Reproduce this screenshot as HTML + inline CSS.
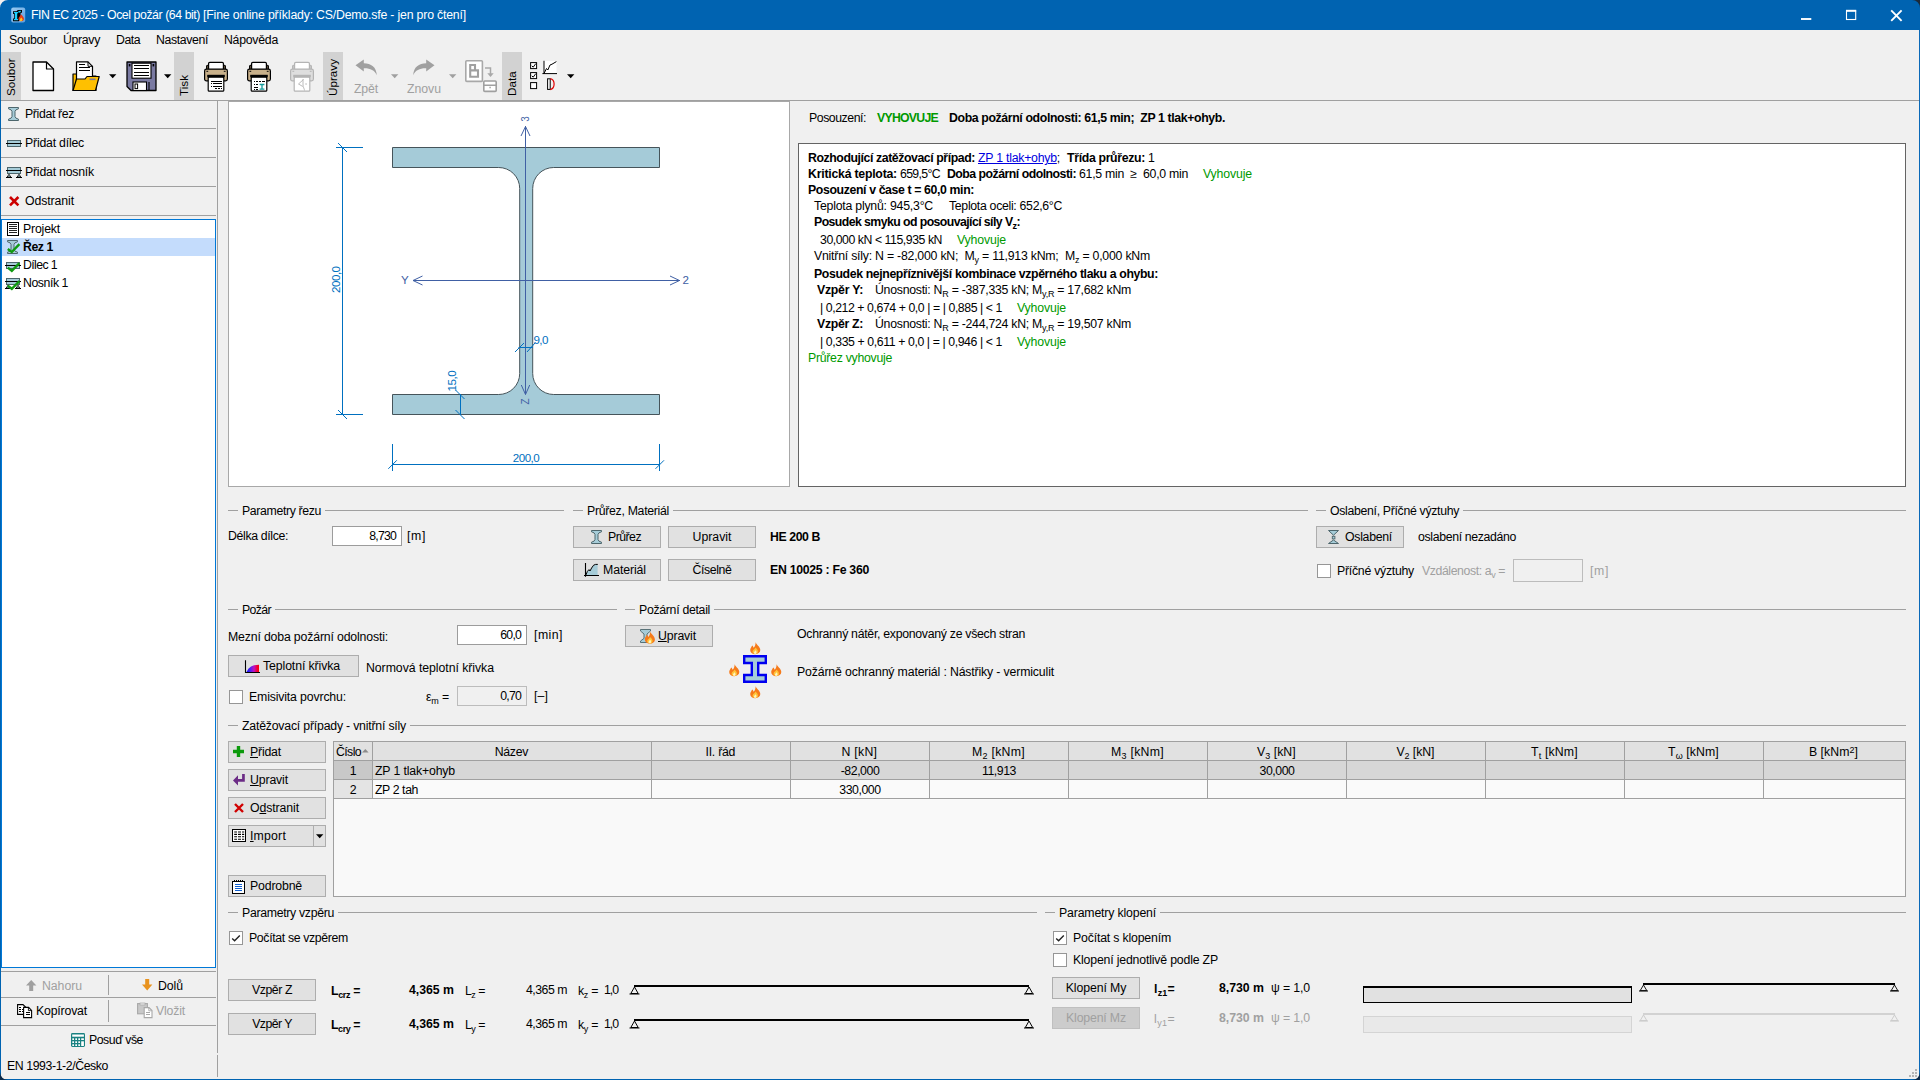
<!DOCTYPE html>
<html lang="cs">
<head>
<meta charset="utf-8">
<title>FIN EC 2025 - Ocel požár</title>
<style>
*{box-sizing:border-box;margin:0;padding:0}
html,body{width:1920px;height:1080px;overflow:hidden}
body{background:#f0f0f0;font-family:"Liberation Sans",sans-serif;font-size:12.3px;color:#000;position:relative}
.a{position:absolute}
.t{position:absolute;white-space:nowrap;line-height:16px;height:16px}
.b{font-weight:bold}
.g{color:#009900}
.d{color:#a0a0a0}
.w{color:#fff}
sub{font-size:9px;vertical-align:baseline;position:relative;top:3px;line-height:0}
sup{font-size:9px;vertical-align:baseline;position:relative;top:-3px;line-height:0}
.btn{position:absolute;background:#e1e1e1;border:1px solid #adadad;height:22px}
.btn.dis{background:#cccccc;border-color:#bfbfbf}
.inp{position:absolute;background:#fff;border:1px solid #9c9c9c;height:20px}
.inp.dis{background:#f0f0f0;border-color:#bcbcbc}
.cb{position:absolute;width:14px;height:14px;background:#fff;border:1px solid #969696}
.hl{position:absolute;height:1px;background:#a0a0a0}
.vl{position:absolute;width:1px;background:#a0a0a0}
.vlab{position:absolute;background:#d2d2d2;width:20px;top:52px;height:48px}
.vlab span{position:absolute;left:2px;bottom:4px;white-space:nowrap;line-height:16px;height:16px;transform-origin:0 100%;transform:rotate(-90deg) translateY(16px);font-size:11.7px}
svg{position:absolute;overflow:visible}
u{text-decoration:underline;text-underline-offset:1px}
</style>
</head>
<body>
<div class="a" style="left:0px;top:0px;width:1920px;height:30px;background:#0063b1"></div>
<svg style="left:0;top:0" width="8" height="8"><path d="M0 0H8A8 8 0 0 0 0 8Z" fill="#f4f0f0"/></svg>
<svg style="left:1912px;top:0" width="8" height="8"><path d="M8 0H0A8 8 0 0 1 8 8Z" fill="#1b2a3a"/></svg>
<svg style="left:11px;top:7px" width="16" height="16" viewBox="0 0 16 16"><defs><linearGradient id="ai" x1="0" y1="0" x2="1" y2="1"><stop offset="0" stop-color="#9ccaf0"/><stop offset="1" stop-color="#5a9fe0"/></linearGradient></defs>
<rect x="0.2" y="0.6" width="14" height="14.8" rx="2" fill="url(#ai)"/>
<path d="M2 4.3H5.6L6.8 3H11V5.8H9.6V9.5L8 12.2V14.2H2V11.4H3.2V7H2Z" fill="#000"/>
<path d="M2.9 5.1H7.1V6.3H6.2V11.9H7.1V13.2H2.9V11.9H3.9V6.3H2.9Z" fill="#18d0ff"/>
<path d="M7 4.6Q8.6 3.5 10.2 3.9Q9.6 5.6 7.8 5.8Z" fill="#18d0ff"/>
<path d="M9.9 7.2Q13.4 10.4 12.9 12.4Q12.4 14.2 10.4 14.2Q8 14.2 7.5 12.2Q7.3 10.8 8.4 9.7Q9.7 8.6 9.9 7.2Z" fill="#ea3a16"/>
<path d="M10.2 10.4Q12 12 11.5 13.1Q11 14.2 10.1 14.2Q8.8 14 8.8 12.9Q9 11.6 10.2 10.4Z" fill="#ffc820"/></svg>
<span id="t1" class="t w" style="left:31px;top:7px;letter-spacing:-0.429px;">FIN EC 2025 - Ocel požár (64 bit)</span>
<span id="t2" class="t w" style="left:203px;top:7px;letter-spacing:-0.158px;">[Fine online příklady:</span>
<span id="t3" class="t w" style="left:316px;top:7px;letter-spacing:-0.184px;">CS/Demo.sfe - jen pro čtení]</span>
<svg style="left:1790px;top:0" width="130" height="30"><path d="M11 19H21.3" stroke="#fff" stroke-width="1.9"/><rect x="56.5" y="11" width="9.2" height="8.5" fill="none" stroke="#fff" stroke-width="1.1"/><path d="M56 10.7H66.2" stroke="#fff" stroke-width="1.8"/><path d="M101.2 10.4L111.6 20.8M111.6 10.4L101.2 20.8" stroke="#fff" stroke-width="1.9"/></svg>
<div class="a" style="left:0px;top:30px;width:1px;height:1050px;background:#0063b1"></div>
<div class="a" style="left:1919px;top:30px;width:1px;height:1050px;background:#0a69b8"></div>
<div class="a" style="left:0px;top:1079px;width:1920px;height:1px;background:#0063b1"></div>
<svg style="left:0;top:1072px" width="8" height="8"><path d="M0 8H8A8 8 0 0 1 0 0Z" fill="#0c2a4a"/></svg>
<svg style="left:1912px;top:1072px" width="8" height="8"><path d="M8 8H0A8 8 0 0 0 8 0Z" fill="#0c2a4a"/></svg>
<svg style="left:1909px;top:1069px" width="8" height="8" viewBox="0 0 8 8"><rect x="6" y="0" width="2" height="2" fill="#b4b4b4"/><rect x="3" y="3" width="2" height="2" fill="#b4b4b4"/><rect x="6" y="3" width="2" height="2" fill="#b4b4b4"/><rect x="0" y="6" width="2" height="2" fill="#b4b4b4"/><rect x="3" y="6" width="2" height="2" fill="#b4b4b4"/><rect x="6" y="6" width="2" height="2" fill="#b4b4b4"/></svg>
<span id="t4" class="t" style="left:9px;top:32px;letter-spacing:-0.277px;">Soubor</span>
<span id="t5" class="t" style="left:63px;top:32px;letter-spacing:-0.327px;">Úpravy</span>
<span id="t6" class="t" style="left:116px;top:32px;letter-spacing:-0.494px;">Data</span>
<span id="t7" class="t" style="left:156px;top:32px;letter-spacing:-0.374px;">Nastavení</span>
<span id="t8" class="t" style="left:224px;top:32px;letter-spacing:-0.258px;">Nápověda</span>
<div class="vlab" style="left:1px"><span>Soubor</span></div>
<div class="vlab" style="left:174px"><span>Tisk</span></div>
<div class="vlab" style="left:323px"><span>Úpravy</span></div>
<div class="vlab" style="left:502px"><span>Data</span></div>
<div class="hl" style="left:1px;top:100px;width:1918px;"></div>
<svg style="left:32px;top:61px" width="23" height="31" viewBox="0 0 23 31"><path d="M1 1H14.5L21.5 8V29.5H1Z" fill="#fff" stroke="#000" stroke-width="1.3" stroke-linejoin="round"/><path d="M14.5 1V8H21.5" fill="none" stroke="#000" stroke-width="1.2" stroke-linejoin="round"/></svg>
<svg style="left:72px;top:61px" width="28" height="31" viewBox="0 0 28 31"><path d="M1 29.5V13H9L11 15H24V29.5Z" fill="#ffc000" stroke="#000" stroke-width="1.2" stroke-linejoin="round"/>
<path d="M4.5 21V0.8H16L20.5 5.3V21Z" fill="#fff" stroke="#000" stroke-width="1.2" stroke-linejoin="round"/><path d="M16 0.8V5.3H20.5" fill="none" stroke="#000" stroke-width="1"/>
<path d="M7 3.5H13M7 6.5H18M7 9.5H18" stroke="#000" stroke-width="1" shape-rendering="crispEdges"/>
<path d="M1 29.5L4.5 18H13L15 15.5H27.2L23.5 29.5Z" fill="#ffc000" stroke="#000" stroke-width="1.2" stroke-linejoin="round"/><rect x="17.5" y="17.5" width="6" height="1.6" fill="#7a7a9a"/></svg>
<svg style="left:109px;top:74px" width="8" height="5" viewBox="0 0 8 5"><path d="M0 0.3H7.4L3.7 4.2Z" fill="#000"/></svg>
<svg style="left:126px;top:61px" width="31" height="31" viewBox="0 0 31 31"><path d="M1 1H30V29.5H5L1 25.5Z" fill="#7a7aa2" stroke="#000" stroke-width="1.3" stroke-linejoin="round"/>
<rect x="6" y="2.2" width="19" height="15" fill="#fff" stroke="#000" stroke-width="1.1"/>
<path d="M8 4.5H22.5M8 7.5H22.5M8 11.5H22.5M8 14.5H22.5" stroke="#000" stroke-width="1" shape-rendering="crispEdges"/>
<rect x="2.8" y="3" width="1.6" height="2.4" fill="#000"/><rect x="26.6" y="3" width="1.6" height="2.4" fill="#000"/>
<rect x="7" y="21" width="13.5" height="8.5" fill="#fff" stroke="#000" stroke-width="1.1"/><rect x="9" y="23" width="2.6" height="4.6" fill="#fff" stroke="#000" stroke-width="1"/>
<path d="M23 21V29.5" stroke="#000" stroke-width="1.1"/></svg>
<svg style="left:164px;top:74px" width="8" height="5" viewBox="0 0 8 5"><path d="M0 0.3H7.4L3.7 4.2Z" fill="#000"/></svg>
<svg style="left:204px;top:60.6px" width="24" height="31" viewBox="0 0 24 31"><path d="M2.6 8.5V5.2Q2.6 4.2 3.6 4.2H20.4Q21.4 4.2 21.4 5.2V8.5" fill="#6b5a40" stroke="#000" stroke-width="1.1"/>
<rect x="4.6" y="1.4" width="14.8" height="7.4" rx="1.2" fill="#fff" stroke="#000" stroke-width="1.2"/>
<rect x="0.6" y="8.2" width="22.8" height="11.6" rx="1.8" fill="#c8b08a" stroke="#000" stroke-width="1.2"/>
<rect x="2.4" y="9.8" width="1.8" height="1" fill="#000"/><rect x="19.8" y="9.8" width="1.8" height="1" fill="#000"/>
<rect x="3.2" y="13.8" width="17.6" height="2.6" fill="#000"/>
<rect x="4.2" y="16.2" width="15.6" height="14" rx="1" fill="#fff" stroke="#000" stroke-width="1.2"/><g shape-rendering="crispEdges" stroke="#000" stroke-width="1"><path d="M6.5 20.5H18M6.5 22.5H7.5M9 22.5H18M6.5 25.5H7.5M9 25.5H18M11 27.5H13M14 27.5H16M17 27.5H18"/></g></svg>
<svg style="left:247px;top:60.6px" width="24" height="31" viewBox="0 0 24 31"><path d="M2.6 8.5V5.2Q2.6 4.2 3.6 4.2H20.4Q21.4 4.2 21.4 5.2V8.5" fill="#6b5a40" stroke="#000" stroke-width="1.1"/>
<rect x="4.6" y="1.4" width="14.8" height="7.4" rx="1.2" fill="#fff" stroke="#000" stroke-width="1.2"/>
<rect x="0.6" y="8.2" width="22.8" height="11.6" rx="1.8" fill="#c8b08a" stroke="#000" stroke-width="1.2"/>
<rect x="2.4" y="9.8" width="1.8" height="1" fill="#000"/><rect x="19.8" y="9.8" width="1.8" height="1" fill="#000"/>
<rect x="3.2" y="13.8" width="17.6" height="2.6" fill="#000"/>
<rect x="4.2" y="16.2" width="15.6" height="14" rx="1" fill="#fff" stroke="#000" stroke-width="1.2"/><g shape-rendering="crispEdges" stroke="#000" stroke-width="1"><path d="M6.5 20.5H7.5M8.5 20.5H10.5M11.5 20.5H13.5M14.5 20.5H17.5M6.5 23.5H7.5M8.5 23.5H11M6.5 26.5H11M6.5 28.5H7.5M8.5 28.5H11"/></g><path d="M12.6 23.5H17.4M12.6 28.2H17.4M15 23.5V28.2" stroke="#109a9a" stroke-width="1.3"/></svg>
<svg style="left:290px;top:60.6px" width="24" height="31" viewBox="0 0 24 31"><path d="M2.6 8.5V5.2Q2.6 4.2 3.6 4.2H20.4Q21.4 4.2 21.4 5.2V8.5" fill="#c8c8c8" stroke="#b4b4b4" stroke-width="1.1"/>
<rect x="4.6" y="1.4" width="14.8" height="7.4" rx="1.2" fill="#fff" stroke="#b4b4b4" stroke-width="1.2"/>
<rect x="0.6" y="8.2" width="22.8" height="11.6" rx="1.8" fill="#dedede" stroke="#b4b4b4" stroke-width="1.2"/>
<rect x="2.4" y="9.8" width="1.8" height="1" fill="#b4b4b4"/><rect x="19.8" y="9.8" width="1.8" height="1" fill="#b4b4b4"/>
<rect x="3.2" y="13.8" width="17.6" height="2.6" fill="#b4b4b4"/>
<rect x="4.2" y="16.2" width="15.6" height="14" rx="1" fill="#fff" stroke="#b4b4b4" stroke-width="1.2"/><path d="M13.5 18.5L8.5 23L12.8 25.5M13 18V24C13 26 14.5 28 14.5 29.5M15.2 23H17" stroke="#b4b4b4" stroke-width="0.9" fill="none"/></svg>
<svg style="left:355px;top:59px" width="23" height="17" viewBox="0 0 23 17"><path d="M0.5 6.2L8.8 0.5V4.2C16 4.2 21.5 8 21.8 16.2C19.5 11 15 9 8.8 9.2V12.5Z" fill="#a0a0a0"/></svg>
<span id="t9" class="t d" style="left:354px;top:81px;letter-spacing:-0.153px;">Zpět</span>
<svg style="left:391px;top:74px" width="8" height="5" viewBox="0 0 8 5"><path d="M0 0.3H7.4L3.7 4.2Z" fill="#a0a0a0"/></svg>
<svg style="left:412px;top:59px" width="23" height="17" viewBox="0 0 23 17"><path d="M22.5 6.2L14.2 0.5V4.2C7 4.2 1.5 8 1.2 16.2C3.5 11 8 9 14.2 9.2V12.5Z" fill="#a0a0a0"/></svg>
<span id="t10" class="t d" style="left:407px;top:81px;letter-spacing:-0.038px;">Znovu</span>
<svg style="left:449px;top:74px" width="8" height="5" viewBox="0 0 8 5"><path d="M0 0.3H7.4L3.7 4.2Z" fill="#a0a0a0"/></svg>
<svg style="left:465px;top:60px" width="33" height="33" viewBox="0 0 33 33"><rect x="0.8" y="0.8" width="16.6" height="20.6" rx="1" fill="#fff" stroke="#a8a8a8" stroke-width="1.6"/>
<path d="M5.2 5H10V10.4H13V16.8H5.2Z M5.2 10.4H10" fill="none" stroke="#a0a0a0" stroke-width="2.1"/>
<path d="M20 8H25.5V15" fill="none" stroke="#a8a8a8" stroke-width="1.5"/><path d="M22.3 13.2H28.7L25.5 17Z" fill="#a8a8a8"/>
<rect x="18.8" y="21" width="12.4" height="10.4" rx="1" fill="#fff" stroke="#a0a0a0" stroke-width="1.6"/><path d="M19 25.2H31M24.4 27.4H25.8" stroke="#a0a0a0" stroke-width="1.5"/></svg>
<svg style="left:530px;top:60px" width="30" height="32" viewBox="0 0 30 32"><rect x="0.6" y="2.6" width="6" height="6" fill="#fff" stroke="#000" stroke-width="1"/><path d="M1.8 5.8L3.2 7.2L5.8 3.6" fill="none" stroke="#000" stroke-width="1"/>
<rect x="0.6" y="12.6" width="6" height="6" fill="#fff" stroke="#000" stroke-width="1"/><path d="M1.8 15.8L3.2 17.2L5.8 13.6" fill="none" stroke="#000" stroke-width="1"/>
<rect x="0.6" y="22.6" width="6" height="6" fill="#fff" stroke="#000" stroke-width="1"/>
<rect x="14" y="1" width="12.5" height="12.5" fill="#fff"/>
<path d="M14 0.8V14M12.4 13.6H27" stroke="#000" stroke-width="1" fill="none"/><path d="M14 13.5L16.5 8.5L17.8 10L20 5L22 4.2L26.4 1.6" stroke="#000" stroke-width="1" fill="none"/>
<rect x="17.6" y="18.8" width="2.6" height="10.6" fill="#fff" stroke="#000" stroke-width="1"/><path d="M20.2 18.6C25.4 19.6 25.4 28.6 20.2 29.6" fill="none" stroke="#e00000" stroke-width="1.2"/></svg>
<svg style="left:567px;top:74px" width="8" height="5" viewBox="0 0 8 5"><path d="M0 0.3H7.4L3.7 4.2Z" fill="#000"/></svg>
<div class="vl" style="left:217px;top:101px;height:952px;"></div>
<div class="vl" style="left:217px;top:1055px;height:22px;"></div>
<div class="hl" style="left:1px;top:128px;width:215px;"></div>
<div class="hl" style="left:1px;top:157px;width:215px;"></div>
<div class="hl" style="left:1px;top:186px;width:215px;"></div>
<div class="hl" style="left:1px;top:215px;width:215px;"></div>
<svg style="left:8px;top:107px" width="11" height="14" viewBox="0 0 11 14"><path d="M0.5 0.5H10.5V1.8Q7.2 2.6 7 4.4V9.6Q7.2 11.4 10.5 12.2V13.5H0.5V12.2Q3.8 11.4 4 9.6V4.4Q3.8 2.6 0.5 1.8Z" fill="#a6ccd8" stroke="#4d666c" stroke-width="1"/></svg>
<span id="t11" class="t" style="left:25px;top:106px;letter-spacing:-0.363px;">Přidat řez</span>
<svg style="left:6px;top:140px" width="16" height="8" viewBox="0 0 16 8"><g shape-rendering="crispEdges"><rect x="1.5" y="0.5" width="13" height="6" fill="#a6ccd8" stroke="#4d666c" stroke-width="1"/><path d="M0 3.5H16" stroke="#000" stroke-width="1"/></g></svg>
<span id="t12" class="t" style="left:25px;top:135px;letter-spacing:-0.210px;">Přidat dílec</span>
<svg style="left:6px;top:167px" width="16" height="11" viewBox="0 0 16 11"><g shape-rendering="crispEdges"><rect x="1.5" y="0.5" width="13" height="6" fill="#a6ccd8" stroke="#4d666c" stroke-width="1"/><path d="M0 3.5H16" stroke="#000" stroke-width="1"/><path d="M0 10.5H6M10 10.5H16" stroke="#000" stroke-width="1"/></g><path d="M3 7.2L1.2 10H4.8Z M13 7.2L11.2 10H14.8Z" fill="#a6ccd8" stroke="#000" stroke-width="0.8"/></svg>
<span id="t13" class="t" style="left:25px;top:164px;letter-spacing:-0.214px;">Přidat nosník</span>
<svg style="left:9px;top:196px" width="10" height="10" viewBox="0 0 10 10"><path d="M1 1L9.4 9.4M9.4 1L1 9.4" stroke="#cc0000" stroke-width="2.6"/></svg>
<span id="t14" class="t" style="left:25px;top:193px;letter-spacing:-0.100px;">Odstranit</span>
<div class="a" style="left:1px;top:219px;width:215px;height:749px;background:#fff;border:1px solid #0078d7"></div>
<div class="a" style="left:2px;top:238px;width:213px;height:18px;background:#c4dcfc"></div>
<svg style="left:7px;top:222px" width="13" height="14" viewBox="0 0 13 14"><g shape-rendering="crispEdges"><rect x="0.5" y="0.5" width="11" height="13" fill="#fff" stroke="#000" stroke-width="1"/><path d="M2 2.5H10M2 4.5H10M2 6.5H10M2 8.5H10M2 10.5H10" stroke="#222" stroke-width="1"/></g></svg>
<span id="t15" class="t" style="left:23px;top:221px;letter-spacing:-0.183px;">Projekt</span>
<svg style="left:7px;top:240px" width="11" height="14" viewBox="0 0 11 14"><path d="M0.5 0.5H10.5V1.8Q7.2 2.6 7 4.4V9.6Q7.2 11.4 10.5 12.2V13.5H0.5V12.2Q3.8 11.4 4 9.6V4.4Q3.8 2.6 0.5 1.8Z" fill="#a6ccd8" stroke="#4d666c" stroke-width="1"/></svg>
<svg style="left:7px;top:243px" width="13" height="10" viewBox="0 0 13 10"><path d="M0.8 6L4.8 9L12.4 1.2" fill="none" stroke="#109a10" stroke-width="2.4"/></svg>
<span id="t16" class="t b" style="left:23px;top:239px;letter-spacing:-0.426px;">Řez 1</span>
<svg style="left:5px;top:262px" width="16" height="8" viewBox="0 0 16 8"><g shape-rendering="crispEdges"><rect x="1.5" y="0.5" width="13" height="6" fill="#a6ccd8" stroke="#4d666c" stroke-width="1"/><path d="M0 3.5H16" stroke="#000" stroke-width="1"/></g></svg>
<svg style="left:7px;top:262px" width="13" height="10" viewBox="0 0 13 10"><path d="M0.8 5.6L4.8 8.8L12.4 1.2" fill="none" stroke="#109a10" stroke-width="2.4"/></svg>
<span id="t17" class="t" style="left:23px;top:257px;letter-spacing:-0.612px;">Dílec 1</span>
<svg style="left:5px;top:278px" width="16" height="11" viewBox="0 0 16 11"><g shape-rendering="crispEdges"><rect x="1.5" y="0.5" width="13" height="6" fill="#a6ccd8" stroke="#4d666c" stroke-width="1"/><path d="M0 3.5H16" stroke="#000" stroke-width="1"/><path d="M0 10.5H6M10 10.5H16" stroke="#000" stroke-width="1"/></g><path d="M3 7.2L1.2 10H4.8Z M13 7.2L11.2 10H14.8Z" fill="#a6ccd8" stroke="#000" stroke-width="0.8"/></svg>
<svg style="left:7px;top:280px" width="13" height="10" viewBox="0 0 13 10"><path d="M0.8 5.6L4.8 8.8L12.4 1.2" fill="none" stroke="#109a10" stroke-width="2.4"/></svg>
<span id="t18" class="t" style="left:23px;top:275px;letter-spacing:-0.442px;">Nosník 1</span>
<div class="hl" style="left:1px;top:971px;width:215px;"></div>
<div class="hl" style="left:1px;top:997px;width:215px;"></div>
<div class="hl" style="left:1px;top:1025px;width:215px;"></div>
<div class="vl" style="left:108px;top:975px;height:20px;"></div>
<div class="vl" style="left:108px;top:1000px;height:22px;"></div>
<svg style="left:26px;top:980px" width="11" height="11" viewBox="0 0 11 11"><path d="M5.2 0L10.4 5.6H7.2V11H3.2V5.6H0Z" fill="#a0a0a0"/></svg>
<span id="t19" class="t d" style="left:42px;top:978px;letter-spacing:-0.056px;">Nahoru</span>
<svg style="left:142px;top:979px" width="11" height="12" viewBox="0 0 11 12"><path d="M5.2 11.4L10.4 5.6H7.2V0H3.2V5.6H0Z" fill="#e8931f"/></svg>
<span id="t20" class="t" style="left:158px;top:978px;letter-spacing:-0.076px;">Dolů</span>
<svg style="left:17px;top:1004px" width="16" height="15" viewBox="0 0 16 15"><path d="M0.6 0.6H6L9 3.6V10.4H0.6Z" fill="#fff" stroke="#000" stroke-width="1.1"/><path d="M2 3.5H4M2 5.5H4M5 5.5H6.4M2 7.5H4M5 7.5H6.4" stroke="#000" stroke-width="1" shape-rendering="crispEdges"/><path d="M6.6 3.4H11.6L14.6 6.4V13.6H6.6Z" fill="#fff" stroke="#000" stroke-width="1.1"/><path d="M11.4 3.6V6.6H14.4" fill="none" stroke="#000" stroke-width="0.9"/><path d="M8.5 8.5H13M8.5 10.5H13M8.5 12" stroke="#000" stroke-width="1" shape-rendering="crispEdges"/></svg>
<span id="t21" class="t" style="left:36px;top:1003px;letter-spacing:-0.183px;">Kopírovat</span>
<svg style="left:137px;top:1003.4px" width="16" height="16" viewBox="0 0 16 16"><rect x="0.6" y="0.6" width="9.8" height="10.2" fill="#c8c8c8" stroke="#a8a8a8" stroke-width="1.1"/><rect x="3" y="0" width="5" height="2" fill="#e6e6e6" stroke="#a8a8a8" stroke-width="0.7"/><path d="M7.2 4.6H12L15 7.6V14.6H7.2Z" fill="#fff" stroke="#a8a8a8" stroke-width="1.1"/><path d="M11.8 4.8V7.8H14.8" fill="none" stroke="#a8a8a8" stroke-width="0.9"/><path d="M9 9.5H13.4M9 11.5H13.4" stroke="#a8a8a8" stroke-width="1" shape-rendering="crispEdges"/></svg>
<span id="t22" class="t d" style="left:156px;top:1003px;letter-spacing:-0.180px;">Vložit</span>
<svg style="left:71px;top:1033px" width="14" height="14" viewBox="0 0 14 14"><rect x="0" y="0" width="14" height="14" rx="1.4" fill="#1a8282"/><rect x="1.2" y="1.5" width="11.7" height="2.2" fill="#fff"/><rect x="1.3" y="5.3" width="1.7" height="1.7" fill="#fff"/><rect x="4.3" y="5.3" width="1.7" height="1.7" fill="#fff"/><rect x="7.3" y="5.3" width="1.7" height="1.7" fill="#fff"/><rect x="1.3" y="8.3" width="1.7" height="1.7" fill="#fff"/><rect x="4.3" y="8.3" width="1.7" height="1.7" fill="#fff"/><rect x="7.3" y="8.3" width="1.7" height="1.7" fill="#fff"/><rect x="1.3" y="11.3" width="1.7" height="1.7" fill="#fff"/><rect x="4.3" y="11.3" width="1.7" height="1.7" fill="#fff"/><rect x="7.3" y="11.3" width="1.7" height="1.7" fill="#fff"/><rect x="10.2" y="5.3" width="2.7" height="1.7" fill="#fff"/><rect x="10.2" y="8.3" width="2.7" height="4.7" fill="#fff"/></svg>
<span id="t23" class="t" style="left:89px;top:1032px;letter-spacing:-0.462px;">Posuď vše</span>
<span id="t24" class="t" style="left:7px;top:1058px;letter-spacing:-0.412px;">EN 1993-1-2/Česko</span>
<div class="a" style="left:228px;top:101px;width:562px;height:386px;background:#fff;border:1px solid #a8a8a8"></div>
<svg style="left:0;top:0" width="800" height="490"><path d="M392.5 147.5H659.5V167.5H553.7A21 21 0 0 0 532.7 188.5V373.5A21 21 0 0 0 553.7 394.5H659.5V414.5H392.5V394.5H498.70000000000005A21 21 0 0 0 519.7 373.5V188.5A21 21 0 0 0 498.70000000000005 167.5H392.5Z" fill="#a5cbd8" stroke="#46545a" stroke-width="1"/><g stroke="#4060a4" stroke-width="1" fill="none"><path d="M525.5 126V394.5"/><path d="M521 136L525.5 126.5L530 136"/><path d="M521.3 385L525.5 394.5L529.7 385"/><path d="M413 280.5H680"/><path d="M422.5 276L413 280.5L422.5 285"/><path d="M670 276L679.5 280.5L670 285"/></g><g stroke="#0070c0" stroke-width="1" fill="none"><path d="M342.5 147V415M336 147.5H363M336 414.5H363M338 143L347 152M338 410L347 419"/><path d="M392 464.5H660M392.5 444V471M659.5 444V471M388.3 468.8L396.8 460.3M655.5 468.8L664 460.3"/><path d="M518.5 347.5H533M515 352L524 343M527 352L535 343"/><path d="M460.5 394V415M455.5 390L464.5 399M455.5 410L464.5 419"/></g><g font-family="Liberation Sans, sans-serif" font-size="11.6" letter-spacing="-0.5" fill="#0070c0"><text x="526" y="462" text-anchor="middle">200,0</text><text transform="translate(339.6,279.7) rotate(-90)" text-anchor="middle">200,0</text><text x="533.5" y="344.4" letter-spacing="-0.6">9,0</text><text transform="translate(456.4,381.2) rotate(-90)" text-anchor="middle">15,0</text></g><g font-family="Liberation Sans, sans-serif" font-size="11.6" fill="#4060a4"><text x="401" y="283.8">Y</text><text x="682.5" y="283.8">2</text><text transform="translate(528.6,119) rotate(-90) scale(0.8,1)" text-anchor="middle">3</text><text transform="translate(528.8,401.5) rotate(-90) scale(0.85,1)" text-anchor="middle">Z</text></g></svg>
<span id="t25" class="t" style="left:809px;top:110px;letter-spacing:-0.454px;">Posouzení:</span>
<span id="t26" class="t b g" style="left:877px;top:110px;letter-spacing:-0.748px;">VYHOVUJE</span>
<span id="t27" class="t b" style="left:949px;top:110px;letter-spacing:-0.372px;">Doba požární odolnosti: 61,5 min;&nbsp; ZP 1 tlak+ohyb.</span>
<div class="a" style="left:798px;top:143px;width:1108px;height:344px;background:#fff;border:1px solid #646464"></div>
<span id="t28" class="t b" style="left:808px;top:150px;letter-spacing:-0.424px;">Rozhodující zatěžovací případ:</span>
<span id="t29" class="t" style="left:978px;top:150px;letter-spacing:-0.239px;"><u style="color:#0000e0">ZP 1 tlak+ohyb</u>;</span>
<span id="t30" class="t b" style="left:1067px;top:150px;letter-spacing:-0.334px;">Třída průřezu:</span>
<span id="t31" class="t" style="left:1148px;top:150px;">1</span>
<span id="t32" class="t b" style="left:808px;top:166px;letter-spacing:-0.232px;">Kritická teplota:</span>
<span id="t33" class="t" style="left:900px;top:166px;letter-spacing:-0.655px;">659,5°C</span>
<span id="t34" class="t b" style="left:947px;top:166px;letter-spacing:-0.510px;">Doba požární odolnosti:</span>
<span id="t35" class="t" style="left:1079px;top:166px;letter-spacing:-0.274px;">61,5 min&nbsp; ≥&nbsp; 60,0 min</span>
<span id="t36" class="t g" style="left:1203px;top:166px;letter-spacing:-0.142px;">Vyhovuje</span>
<span id="t37" class="t b" style="left:808px;top:182px;letter-spacing:-0.378px;">Posouzení v čase t = 60,0 min:</span>
<span id="t38" class="t" style="left:814px;top:198px;letter-spacing:-0.222px;">Teplota plynů: 945,3°C</span>
<span id="t39" class="t" style="left:949px;top:198px;letter-spacing:-0.308px;">Teplota oceli: 652,6°C</span>
<span id="t40" class="t b" style="left:814px;top:214px;letter-spacing:-0.576px;">Posudek smyku od posouvající síly V<sub>z</sub>:</span>
<span id="t41" class="t" style="left:820px;top:232px;letter-spacing:-0.457px;">30,000 kN &lt; 115,935 kN</span>
<span id="t42" class="t g" style="left:957px;top:232px;letter-spacing:-0.143px;">Vyhovuje</span>
<span id="t43" class="t" style="left:814px;top:248px;letter-spacing:-0.225px;">Vnitřní síly: N = -82,000 kN;&nbsp; M<sub>y</sub> = 11,913 kNm;&nbsp; M<sub>z</sub> = 0,000 kNm</span>
<span id="t44" class="t b" style="left:814px;top:266px;letter-spacing:-0.378px;">Posudek nejnepříznivější kombinace vzpěrného tlaku a ohybu:</span>
<span id="t45" class="t b" style="left:817px;top:282px;letter-spacing:-0.259px;">Vzpěr Y:</span>
<span id="t46" class="t" style="left:875px;top:282px;letter-spacing:-0.264px;">Únosnosti: N<sub>R</sub> = -387,335 kN; M<sub>y,R</sub> = 17,682 kNm</span>
<span id="t47" class="t" style="left:820px;top:300px;letter-spacing:-0.430px;">| 0,212 + 0,674 + 0,0 | = | 0,885 | &lt; 1</span>
<span id="t48" class="t g" style="left:1017px;top:300px;letter-spacing:-0.142px;">Vyhovuje</span>
<span id="t49" class="t b" style="left:817px;top:316px;letter-spacing:-0.315px;">Vzpěr Z:</span>
<span id="t50" class="t" style="left:875px;top:316px;letter-spacing:-0.264px;">Únosnosti: N<sub>R</sub> = -244,724 kN; M<sub>y,R</sub> = 19,507 kNm</span>
<span id="t51" class="t" style="left:820px;top:334px;letter-spacing:-0.406px;">| 0,335 + 0,611 + 0,0 | = | 0,946 | &lt; 1</span>
<span id="t52" class="t g" style="left:1017px;top:334px;letter-spacing:-0.143px;">Vyhovuje</span>
<span id="t53" class="t g" style="left:808px;top:350px;letter-spacing:-0.278px;">Průřez vyhovuje</span>
<div class="hl" style="left:228px;top:510px;width:10px;"></div>
<span id="t54" class="t" style="left:242px;top:503px;letter-spacing:-0.362px;">Parametry řezu</span>
<div class="hl" style="left:325px;top:510px;width:239px;"></div>
<span id="t55" class="t" style="left:228px;top:528px;letter-spacing:-0.354px;">Délka dílce:</span>
<div class="inp " style="left:332px;top:526px;width:70px;height:20px"></div>
<span class="t" style="right:1523.8px;top:528px;letter-spacing:-0.75px;">8,730</span>
<span id="t56" class="t" style="left:407px;top:528px;letter-spacing:0.640px;">[m]</span>
<div class="hl" style="left:573px;top:510px;width:10px;"></div>
<span id="t57" class="t" style="left:587px;top:503px;letter-spacing:-0.300px;">Průřez, Materiál</span>
<div class="hl" style="left:673px;top:510px;width:635px;"></div>
<div class="btn " style="left:573px;top:526px;width:88px;height:22px"></div>
<span id="t58" class="t" style="left:608px;top:529px;letter-spacing:-0.538px;">Průřez</span>
<svg style="left:591px;top:530px" width="11" height="14" viewBox="0 0 11 14"><path d="M0.5 0.5H10.5V1.8Q7.2 2.6 7 4.4V9.6Q7.2 11.4 10.5 12.2V13.5H0.5V12.2Q3.8 11.4 4 9.6V4.4Q3.8 2.6 0.5 1.8Z" fill="#a6ccd8" stroke="#4d666c" stroke-width="1"/></svg>
<div class="btn " style="left:668px;top:526px;width:88px;height:22px"></div>
<span id="c59" class="t" style="left:692.5px;top:529px;letter-spacing:0.007px;">Upravit</span>
<span id="t60" class="t b" style="left:770px;top:529px;letter-spacing:-0.416px;">HE 200 B</span>
<div class="btn " style="left:573px;top:559px;width:88px;height:22px"></div>
<span id="t61" class="t" style="left:603px;top:562px;letter-spacing:-0.092px;">Materiál</span>
<svg style="left:584px;top:563px" width="16" height="14" viewBox="0 0 16 14"><path d="M1.9 12L3.4 8.6L5 6.8L6 8L7.6 5L9.6 2.2L11.6 1.5H13.6V12Z" fill="#a6ccd8"/><path d="M1.5 0V13.8M0 12.5H15" stroke="#000" stroke-width="1.1" fill="none"/><path d="M1.8 12.2L3.4 8.4L5 6.6L6 8L7.6 5L9.6 2.2L11.6 1.4H13.8" fill="none" stroke="#000" stroke-width="1"/></svg>
<div class="btn " style="left:668px;top:559px;width:88px;height:22px"></div>
<span id="c62" class="t" style="left:692.4px;top:562px;letter-spacing:-0.358px;">Číselně</span>
<span id="t63" class="t b" style="left:770px;top:562px;letter-spacing:-0.289px;">EN 10025 : Fe 360</span>
<div class="hl" style="left:1316px;top:510px;width:10px;"></div>
<span id="t64" class="t" style="left:1330px;top:503px;letter-spacing:-0.321px;">Oslabení, Příčné výztuhy</span>
<div class="hl" style="left:1463px;top:510px;width:443px;"></div>
<div class="btn " style="left:1316px;top:526px;width:88px;height:22px"></div>
<span id="t65" class="t" style="left:1345px;top:529px;letter-spacing:-0.279px;">Oslabení</span>
<svg style="left:1328px;top:530px" width="11" height="14" viewBox="0 0 11 14"><path d="M0.5 0.5H10.5L5.5 5.2Z" fill="#a6ccd8" stroke="#4d666c" stroke-width="1" stroke-linejoin="round"/><path d="M0.5 13.5H10.5L5.5 10Z" fill="#a6ccd8" stroke="#4d666c" stroke-width="1" stroke-linejoin="round"/><rect x="4.3" y="6.3" width="2.6" height="2.6" fill="#a6ccd8" stroke="#4d666c" stroke-width="0.9"/></svg>
<span id="t66" class="t" style="left:1418px;top:529px;letter-spacing:-0.349px;">oslabení nezadáno</span>
<div class="cb" style="left:1317px;top:564px"></div>
<span id="t67" class="t" style="left:1337px;top:563px;letter-spacing:-0.261px;">Příčné výztuhy</span>
<span id="t68" class="t d" style="left:1422px;top:563px;letter-spacing:-0.415px;">Vzdálenost: a<sub>v</sub> =</span>
<div class="inp dis" style="left:1513px;top:559px;width:70px;height:23px"></div>
<span id="t69" class="t d" style="left:1590px;top:563px;letter-spacing:0.638px;">[m]</span>
<div class="hl" style="left:228px;top:609px;width:10px;"></div>
<span id="t70" class="t" style="left:242px;top:602px;letter-spacing:-0.626px;">Požár</span>
<div class="hl" style="left:275px;top:609px;width:342px;"></div>
<span id="t71" class="t" style="left:228px;top:629px;letter-spacing:-0.164px;">Mezní doba požární odolnosti:</span>
<div class="inp " style="left:457px;top:625px;width:70px;height:20px"></div>
<span class="t" style="right:1398.8px;top:627px;letter-spacing:-0.75px;">60,0</span>
<span id="t72" class="t" style="left:534px;top:627px;letter-spacing:0.468px;">[min]</span>
<div class="btn " style="left:228px;top:655px;width:131px;height:22px"></div>
<span id="t73" class="t" style="left:263px;top:658px;letter-spacing:-0.107px;">Teplotní křivka</span>
<svg style="left:244px;top:659px" width="17" height="15" viewBox="0 0 17 15"><defs><linearGradient id="tk" x1="0" x2="1" y1="0" y2="0"><stop offset="0" stop-color="#1010ff"/><stop offset="0.3" stop-color="#5020f0"/><stop offset="0.6" stop-color="#c010c0"/><stop offset="0.85" stop-color="#f00030"/><stop offset="1" stop-color="#ff0000"/></linearGradient></defs><path d="M2.6 13L4.4 9.8L7 7.4L10 6.2L15 5.8V13Z" fill="url(#tk)"/><path d="M1.5 1.2V14M1 13.5H16" stroke="#000" stroke-width="1.1" fill="none"/></svg>
<span id="t74" class="t" style="left:366px;top:660px;letter-spacing:-0.051px;">Normová teplotní křivka</span>
<div class="cb" style="left:229px;top:690px"></div>
<span id="t75" class="t" style="left:249px;top:689px;letter-spacing:-0.154px;">Emisivita povrchu:</span>
<span id="t76" class="t" style="left:426px;top:689px;letter-spacing:-0.152px;">ε<sub>m</sub> =</span>
<div class="inp dis" style="left:457px;top:686px;width:70px;height:20px"></div>
<span class="t" style="right:1398.8px;top:688px;letter-spacing:-0.75px;">0,70</span>
<span id="t77" class="t" style="left:534px;top:688px;letter-spacing:0.107px;">[–]</span>
<div class="hl" style="left:625px;top:609px;width:10px;"></div>
<span id="t78" class="t" style="left:639px;top:602px;letter-spacing:-0.300px;">Požární detail</span>
<div class="hl" style="left:714px;top:609px;width:1192px;"></div>
<div class="btn " style="left:625px;top:625px;width:88px;height:22px"></div>
<span id="t79" class="t" style="left:658px;top:628px;letter-spacing:-0.137px;"><u>U</u>pravit</span>
<svg style="left:640px;top:629px" width="16" height="15" viewBox="0 0 16 15"><path d="M0.5 0.5H10.5V2L7 5V9.4L10.5 12V13.5H0.5V12L4 9.4V5L0.5 2Z" fill="#a6ccd8" stroke="#4d666c" stroke-width="0.9"/><g transform="translate(4.6,2.2) scale(1.0,1.02)"><path d="M5.5 0C6 2.6 10.3 4.4 10.3 8.1C10.3 10.8 8 12.2 5.2 12.2C2.2 12.2 0.2 10.6 0.2 8C0.2 6 1.6 5 2.2 3.4C3.2 4.2 3.4 5 3.6 5.8C5 4.4 5.8 2.4 5.5 0Z" fill="#f67a1a"/><path d="M5.4 5.6C6.8 7 8.2 8.2 7.9 10C7.7 11.4 6.4 12.1 5.2 12.1C3.6 12.1 2.5 11 2.6 9.6C2.7 8.4 3.8 7.9 4.5 7.1C4.9 6.6 5.3 6.2 5.4 5.6Z" fill="#ffc53a"/><path d="M5.3 8.2C6 9 6.7 9.6 6.5 10.6C6.4 11.5 5.8 11.9 5.2 11.9C4.4 11.9 3.9 11.3 4 10.5C4.1 9.6 5 9.2 5.3 8.2Z" fill="#fff3c0"/></g></svg>
<svg style="left:743px;top:655px" width="24" height="28" viewBox="0 0 24 28"><path d="M1.2 1.2H22.8V8H15.2V20H22.8V26.8H1.2V20H8.8V8H1.2Z" fill="#a6ccd8" stroke="#0000f0" stroke-width="2.4" stroke-linejoin="miter"/></svg>
<svg style="left:749.7px;top:641.9px" width="11" height="13" viewBox="0 0 11 13"><path d="M5.5 0C6 2.6 10.3 4.4 10.3 8.1C10.3 10.8 8 12.2 5.2 12.2C2.2 12.2 0.2 10.6 0.2 8C0.2 6 1.6 5 2.2 3.4C3.2 4.2 3.4 5 3.6 5.8C5 4.4 5.8 2.4 5.5 0Z" fill="#f67a1a"/><path d="M5.4 5.6C6.8 7 8.2 8.2 7.9 10C7.7 11.4 6.4 12.1 5.2 12.1C3.6 12.1 2.5 11 2.6 9.6C2.7 8.4 3.8 7.9 4.5 7.1C4.9 6.6 5.3 6.2 5.4 5.6Z" fill="#ffc53a"/><path d="M5.3 8.2C6 9 6.7 9.6 6.5 10.6C6.4 11.5 5.8 11.9 5.2 11.9C4.4 11.9 3.9 11.3 4 10.5C4.1 9.6 5 9.2 5.3 8.2Z" fill="#fff3c0"/></svg>
<svg style="left:728.9px;top:663.9px" width="11" height="13" viewBox="0 0 11 13"><path d="M5.5 0C6 2.6 10.3 4.4 10.3 8.1C10.3 10.8 8 12.2 5.2 12.2C2.2 12.2 0.2 10.6 0.2 8C0.2 6 1.6 5 2.2 3.4C3.2 4.2 3.4 5 3.6 5.8C5 4.4 5.8 2.4 5.5 0Z" fill="#f67a1a"/><path d="M5.4 5.6C6.8 7 8.2 8.2 7.9 10C7.7 11.4 6.4 12.1 5.2 12.1C3.6 12.1 2.5 11 2.6 9.6C2.7 8.4 3.8 7.9 4.5 7.1C4.9 6.6 5.3 6.2 5.4 5.6Z" fill="#ffc53a"/><path d="M5.3 8.2C6 9 6.7 9.6 6.5 10.6C6.4 11.5 5.8 11.9 5.2 11.9C4.4 11.9 3.9 11.3 4 10.5C4.1 9.6 5 9.2 5.3 8.2Z" fill="#fff3c0"/></svg>
<svg style="left:770.9px;top:663.9px" width="11" height="13" viewBox="0 0 11 13"><path d="M5.5 0C6 2.6 10.3 4.4 10.3 8.1C10.3 10.8 8 12.2 5.2 12.2C2.2 12.2 0.2 10.6 0.2 8C0.2 6 1.6 5 2.2 3.4C3.2 4.2 3.4 5 3.6 5.8C5 4.4 5.8 2.4 5.5 0Z" fill="#f67a1a"/><path d="M5.4 5.6C6.8 7 8.2 8.2 7.9 10C7.7 11.4 6.4 12.1 5.2 12.1C3.6 12.1 2.5 11 2.6 9.6C2.7 8.4 3.8 7.9 4.5 7.1C4.9 6.6 5.3 6.2 5.4 5.6Z" fill="#ffc53a"/><path d="M5.3 8.2C6 9 6.7 9.6 6.5 10.6C6.4 11.5 5.8 11.9 5.2 11.9C4.4 11.9 3.9 11.3 4 10.5C4.1 9.6 5 9.2 5.3 8.2Z" fill="#fff3c0"/></svg>
<svg style="left:749.7px;top:686px" width="11" height="13" viewBox="0 0 11 13"><path d="M5.5 0C6 2.6 10.3 4.4 10.3 8.1C10.3 10.8 8 12.2 5.2 12.2C2.2 12.2 0.2 10.6 0.2 8C0.2 6 1.6 5 2.2 3.4C3.2 4.2 3.4 5 3.6 5.8C5 4.4 5.8 2.4 5.5 0Z" fill="#f67a1a"/><path d="M5.4 5.6C6.8 7 8.2 8.2 7.9 10C7.7 11.4 6.4 12.1 5.2 12.1C3.6 12.1 2.5 11 2.6 9.6C2.7 8.4 3.8 7.9 4.5 7.1C4.9 6.6 5.3 6.2 5.4 5.6Z" fill="#ffc53a"/><path d="M5.3 8.2C6 9 6.7 9.6 6.5 10.6C6.4 11.5 5.8 11.9 5.2 11.9C4.4 11.9 3.9 11.3 4 10.5C4.1 9.6 5 9.2 5.3 8.2Z" fill="#fff3c0"/></svg>
<span id="t80" class="t" style="left:797px;top:626px;letter-spacing:-0.291px;">Ochranný nátěr, exponovaný ze všech stran</span>
<span id="t81" class="t" style="left:797px;top:664px;letter-spacing:-0.153px;">Požárně ochranný materiál : Nástřiky - vermiculit</span>
<div class="hl" style="left:228px;top:725px;width:10px;"></div>
<span id="t82" class="t" style="left:242px;top:718px;letter-spacing:-0.208px;">Zatěžovací případy - vnitřní síly</span>
<div class="hl" style="left:410px;top:725px;width:1496px;"></div>
<div class="btn " style="left:228px;top:741px;width:98px;height:22px"></div>
<span id="t83" class="t" style="left:250px;top:744px;letter-spacing:-0.188px;"><u>P</u>řidat</span>
<svg style="left:233px;top:746px" width="11" height="11" viewBox="0 0 11 11"><path d="M5.5 0V11M0 5.5H11" stroke="#0c9a0c" stroke-width="3.4"/></svg>
<div class="btn " style="left:228px;top:769px;width:98px;height:22px"></div>
<span id="t84" class="t" style="left:250px;top:772px;letter-spacing:-0.137px;"><u>U</u>pravit</span>
<svg style="left:233px;top:774px" width="12" height="12" viewBox="0 0 12 12"><path d="M0 6.4L5 1.2V5H9.1V0H11.8V7.8H5V11.4Z" fill="#6c2c86"/></svg>
<div class="btn " style="left:228px;top:797px;width:98px;height:22px"></div>
<span id="t85" class="t" style="left:250px;top:800px;letter-spacing:-0.102px;">O<u>d</u>stranit</span>
<svg style="left:234px;top:803px" width="10" height="10" viewBox="0 0 10 10"><path d="M1 1L9 9M9 1L1 9" stroke="#d00000" stroke-width="2.4"/></svg>
<div class="btn " style="left:228px;top:825px;width:98px;height:22px"></div>
<span id="t86" class="t" style="left:250px;top:828px;letter-spacing:0.189px;"><u>I</u>mport</span>
<div class="vl" style="left:313px;top:826px;height:20px;background:#adadad;"></div>
<svg style="left:232px;top:829px" width="14" height="13" viewBox="0 0 14 13"><rect x="0.5" y="0.5" width="13" height="12" fill="#fff" stroke="#000" stroke-width="1" shape-rendering="crispEdges"/><path d="M2.2 3H5M6 3H9M10 3H12.2M2.2 5.4H5M6 5.4H9M10 5.4H12.2M2.2 7.8H5M6 7.8H9M10 7.8H12.2M2.2 10.2H5M6 10.2H9M10 10.2H12.2" stroke="#000" stroke-width="1.1"/></svg>
<svg style="left:316px;top:834px" width="8" height="5" viewBox="0 0 8 5"><path d="M0 0.3H7.4L3.7 4.2Z" fill="#000"/></svg>
<div class="btn " style="left:228px;top:875px;width:98px;height:22px"></div>
<span id="t87" class="t" style="left:250px;top:878px;letter-spacing:-0.168px;">Podrobně</span>
<svg style="left:232px;top:879px" width="13" height="15" viewBox="0 0 13 15"><g shape-rendering="crispEdges"><rect x="0.5" y="2.5" width="12" height="12" fill="#fff" stroke="#000" stroke-width="1"/><path d="M2.5 0.5V3M4.5 0.5V3M6.5 0.5V3M8.5 0.5V3M10.5 0.5V3" stroke="#000" stroke-width="1"/><path d="M3 5.5H10M3 7.5H10M3 9.5H10M3 11.5H10" stroke="#1060d0" stroke-width="1"/></g></svg>
<div class="a" style="left:333px;top:741px;width:1573px;height:156px;background:#f9f9f9;border:1px solid #a0a0a0"></div>
<div class="a" style="left:334px;top:742px;width:1571px;height:18px;background:#e1e1e1"></div>
<div class="a" style="left:334px;top:761px;width:1571px;height:18px;background:#d7d7d7"></div>
<div class="a" style="left:334px;top:761px;width:38px;height:18px;background:#c8c8c8"></div>
<div class="a" style="left:334px;top:780px;width:38px;height:18px;background:#e4e4e4"></div>
<div class="a" style="left:373px;top:780px;width:1532px;height:18px;background:#fafafa"></div>
<div class="hl" style="left:334px;top:760px;width:1571px;"></div>
<div class="hl" style="left:334px;top:779px;width:1571px;"></div>
<div class="hl" style="left:334px;top:798px;width:1571px;"></div>
<div class="vl" style="left:372px;top:742px;height:56px;"></div>
<div class="vl" style="left:651px;top:742px;height:56px;"></div>
<div class="vl" style="left:790px;top:742px;height:56px;"></div>
<div class="vl" style="left:929px;top:742px;height:56px;"></div>
<div class="vl" style="left:1068px;top:742px;height:56px;"></div>
<div class="vl" style="left:1207px;top:742px;height:56px;"></div>
<div class="vl" style="left:1346px;top:742px;height:56px;"></div>
<div class="vl" style="left:1485px;top:742px;height:56px;"></div>
<div class="vl" style="left:1624px;top:742px;height:56px;"></div>
<div class="vl" style="left:1763px;top:742px;height:56px;"></div>
<div class="vl" style="left:1905px;top:742px;height:57px;"></div>
<span id="t88" class="t" style="left:336px;top:744px;letter-spacing:-0.606px;">Číslo</span>
<svg style="left:362px;top:749px" width="7" height="4" viewBox="0 0 7 4"><path d="M0 3.6L3.3 0L6.6 3.6Z" fill="#8c8c8c"/></svg>
<span id="c89" class="t" style="left:494.8px;top:744px;letter-spacing:-0.332px;">Název</span>
<span id="c90" class="t" style="left:705.6px;top:744px;letter-spacing:-0.279px;">II. řád</span>
<span id="c91" class="t" style="left:841.6px;top:744px;letter-spacing:0.238px;">N [kN]</span>
<span id="c92" class="t" style="left:971.9px;top:744px;letter-spacing:0.289px;">M<sub>2</sub> [kNm]</span>
<span id="c93" class="t" style="left:1110.9px;top:744px;letter-spacing:0.290px;">M<sub>3</sub> [kNm]</span>
<span id="c94" class="t" style="left:1257.1px;top:744px;letter-spacing:0.014px;">V<sub>3</sub> [kN]</span>
<span id="c95" class="t" style="left:1396.4px;top:744px;letter-spacing:-0.073px;">V<sub>2</sub> [kN]</span>
<span id="c96" class="t" style="left:1531.0px;top:744px;letter-spacing:0.154px;">T<sub>t</sub> [kNm]</span>
<span id="c97" class="t" style="left:1668.1px;top:744px;letter-spacing:0.066px;">T<sub>ω</sub> [kNm]</span>
<span id="c98" class="t" style="left:1808.9px;top:744px;letter-spacing:0.043px;">B [kNm<sup>2</sup>]</span>
<span class="t" style="left:338.0px;width:30px;text-align:center;top:763px;letter-spacing:-0.45px;">1</span>
<span class="t" style="left:338.0px;width:30px;text-align:center;top:782px;letter-spacing:-0.45px;">2</span>
<span id="t99" class="t" style="left:375px;top:763px;letter-spacing:-0.154px;">ZP 1 tlak+ohyb</span>
<span id="t100" class="t" style="left:375px;top:782px;letter-spacing:-0.409px;">ZP 2 tah</span>
<span class="t" style="left:810.0px;width:100px;text-align:center;top:763px;letter-spacing:-0.45px;">-82,000</span>
<span class="t" style="left:810.0px;width:100px;text-align:center;top:782px;letter-spacing:-0.45px;">330,000</span>
<span class="t" style="left:949.0px;width:100px;text-align:center;top:763px;letter-spacing:-0.45px;">11,913</span>
<span class="t" style="left:1227.0px;width:100px;text-align:center;top:763px;letter-spacing:-0.45px;">30,000</span>
<div class="hl" style="left:228px;top:912px;width:10px;"></div>
<span id="t101" class="t" style="left:242px;top:905px;letter-spacing:-0.316px;">Parametry vzpěru</span>
<div class="hl" style="left:338px;top:912px;width:699px;"></div>
<div class="cb" style="left:229px;top:931px"><svg style="left:0;top:0" width="12" height="12"><path d="M2.2 6.4L4.6 8.7L9.8 3.4" fill="none" stroke="#222" stroke-width="1.4"/></svg></div>
<span id="t102" class="t" style="left:249px;top:930px;letter-spacing:-0.348px;">Počítat se vzpěrem</span>
<div class="btn " style="left:228px;top:979px;width:88px;height:22px"></div>
<span id="c103" class="t" style="left:251.9px;top:982px;letter-spacing:-0.409px;">Vzpěr Z</span>
<div class="btn " style="left:228px;top:1013px;width:88px;height:22px"></div>
<span id="c104" class="t" style="left:252.2px;top:1016px;letter-spacing:-0.561px;">Vzpěr Y</span>
<span id="t105" class="t b" style="left:331px;top:983px;letter-spacing:-0.358px;">L<sub>crz</sub> =</span>
<span id="t106" class="t b" style="left:409px;top:982px;letter-spacing:-0.018px;">4,365 m</span>
<span id="t107" class="t" style="left:465px;top:983px;letter-spacing:-0.488px;">L<sub>z</sub> =</span>
<span id="t108" class="t" style="left:526px;top:982px;letter-spacing:-0.491px;">4,365 m</span>
<span id="t109" class="t" style="left:578px;top:983px;letter-spacing:-0.317px;">k<sub>z</sub> =</span>
<span id="t110" class="t" style="left:604px;top:982px;letter-spacing:-1.033px;">1,0</span>
<svg style="left:627.5px;top:984px" width="404" height="12" viewBox="0 0 404 12"><path d="M6 2H401" stroke="#000" stroke-width="2"/><path d="M6.5 3L2.8 9.5H10.2Z M401 3L397.3 9.5H404.7Z" fill="#f0f0f0" stroke="#000" stroke-width="1"/><path d="M1.5 10H11.5M396 10H406" stroke="#000" stroke-width="1.2"/></svg>
<span id="t111" class="t b" style="left:331px;top:1017px;letter-spacing:-0.441px;">L<sub>cry</sub> =</span>
<span id="t112" class="t b" style="left:409px;top:1016px;letter-spacing:-0.018px;">4,365 m</span>
<span id="t113" class="t" style="left:465px;top:1017px;letter-spacing:-0.493px;">L<sub>y</sub> =</span>
<span id="t114" class="t" style="left:526px;top:1016px;letter-spacing:-0.492px;">4,365 m</span>
<span id="t115" class="t" style="left:578px;top:1017px;letter-spacing:-0.316px;">k<sub>y</sub> =</span>
<span id="t116" class="t" style="left:604px;top:1016px;letter-spacing:-1.036px;">1,0</span>
<svg style="left:627.5px;top:1018px" width="404" height="12" viewBox="0 0 404 12"><path d="M6 2H401" stroke="#000" stroke-width="2"/><path d="M6.5 3L2.8 9.5H10.2Z M401 3L397.3 9.5H404.7Z" fill="#f0f0f0" stroke="#000" stroke-width="1"/><path d="M1.5 10H11.5M396 10H406" stroke="#000" stroke-width="1.2"/></svg>
<div class="hl" style="left:1045px;top:912px;width:10px;"></div>
<span id="t117" class="t" style="left:1059px;top:905px;letter-spacing:-0.164px;">Parametry klopení</span>
<div class="hl" style="left:1160px;top:912px;width:746px;"></div>
<div class="cb" style="left:1053px;top:931px"><svg style="left:0;top:0" width="12" height="12"><path d="M2.2 6.4L4.6 8.7L9.8 3.4" fill="none" stroke="#222" stroke-width="1.4"/></svg></div>
<span id="t118" class="t" style="left:1073px;top:930px;letter-spacing:-0.176px;">Počítat s klopením</span>
<div class="cb" style="left:1053px;top:953px"></div>
<span id="t119" class="t" style="left:1073px;top:952px;letter-spacing:-0.175px;">Klopení jednotlivě podle ZP</span>
<div class="btn " style="left:1052px;top:977px;width:88px;height:22px"></div>
<span id="c120" class="t" style="left:1065.7px;top:980px;letter-spacing:-0.093px;">Klopení My</span>
<div class="btn dis" style="left:1052px;top:1007px;width:88px;height:22px"></div>
<span id="c121" class="t d" style="left:1066.1px;top:1010px;letter-spacing:-0.172px;">Klopení Mz</span>
<span id="t122" class="t b" style="left:1154px;top:981px;letter-spacing:0.219px;">l<sub>z1</sub>=</span>
<span id="t123" class="t b" style="left:1219px;top:980px;letter-spacing:-0.018px;">8,730 m</span>
<span id="t124" class="t" style="left:1271px;top:980px;letter-spacing:-0.125px;">ψ = 1,0</span>
<div class="a" style="left:1363px;top:986px;width:269px;height:17px;background:#e1e1e1;border:1px solid #000;border-top-width:2px"></div>
<svg style="left:1637px;top:982px" width="264" height="12" viewBox="0 0 264 12"><path d="M6 2H258" stroke="#000" stroke-width="2"/><path d="M6.5 3L3.2 8.6H9.8Z M257.5 3L254.2 8.6H260.8Z" fill="#f0f0f0" stroke="#000" stroke-width="0.9"/><path d="M2 9H11M253 9H262" stroke="#000" stroke-width="1.1"/></svg>
<span id="t125" class="t d" style="left:1154px;top:1011px;letter-spacing:0.391px;">l<sub>y1</sub>=</span>
<span id="t126" class="t b d" style="left:1219px;top:1010px;letter-spacing:-0.018px;">8,730 m</span>
<span id="t127" class="t d" style="left:1271px;top:1010px;letter-spacing:-0.125px;">ψ = 1,0</span>
<div class="a" style="left:1363px;top:1016px;width:269px;height:17px;background:#e9e9e9;border:1px solid #d4d4d4"></div>
<svg style="left:1637px;top:1012px" width="264" height="12" viewBox="0 0 264 12"><path d="M6 2H258" stroke="#c8c8c8" stroke-width="1.6"/><path d="M6.5 3L3.2 8.6H9.8Z M257.5 3L254.2 8.6H260.8Z" fill="#f0f0f0" stroke="#c8c8c8" stroke-width="0.9"/><path d="M2 9H11M253 9H262" stroke="#c8c8c8" stroke-width="1.1"/></svg>
</body>
</html>
